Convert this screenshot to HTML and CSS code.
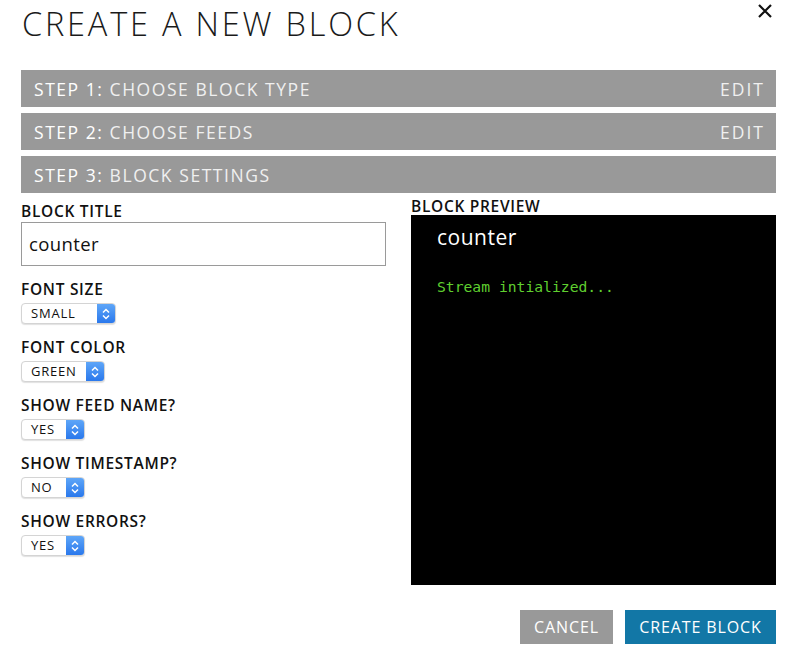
FILE: index.html
```html
<!DOCTYPE html>
<html>
<head>
<meta charset="utf-8">
<link rel="stylesheet" href="styles.css">
</head>
<body>
<div class="modal">
  <div class="header">
    <h1 class="title">CREATE A NEW BLOCK</h1>
    <span class="close">
      <svg width="16" height="16" viewBox="0 0 16 16"><path d="M2 2 L14 14 M14 2 L2 14" stroke="#111" stroke-width="2.2" fill="none"/></svg>
    </span>
  </div>
  <div class="steps">
    <div class="step"><span><b class="num">STEP 1:</b> CHOOSE BLOCK TYPE</span><span class="edit">EDIT</span></div>
    <div class="step"><span><b class="num">STEP 2:</b> CHOOSE FEEDS</span><span class="edit">EDIT</span></div>
    <div class="step"><span><b class="num">STEP 3:</b> BLOCK SETTINGS</span></div>
  </div>
  <div class="form">
    <div class="left">
      <div class="field">
        <label class="label first">BLOCK TITLE</label>
        <div class="input">counter</div>
      </div>
      <div class="field">
        <label class="label">FONT SIZE</label>
        <div class="select w-small"><span class="val">SMALL</span><span class="arrows"><svg width="10" height="14" viewBox="0 0 10 14"><path d="M2 5.5 L5 2.5 L8 5.5 M2 8.5 L5 11.5 L8 8.5" stroke="#fff" stroke-width="1.5" fill="none"/></svg></span></div>
      </div>
      <div class="field">
        <label class="label">FONT COLOR</label>
        <div class="select w-green"><span class="val">GREEN</span><span class="arrows"><svg width="10" height="14" viewBox="0 0 10 14"><path d="M2 5.5 L5 2.5 L8 5.5 M2 8.5 L5 11.5 L8 8.5" stroke="#fff" stroke-width="1.5" fill="none"/></svg></span></div>
      </div>
      <div class="field">
        <label class="label">SHOW FEED NAME?</label>
        <div class="select w-yes"><span class="val">YES</span><span class="arrows"><svg width="10" height="14" viewBox="0 0 10 14"><path d="M2 5.5 L5 2.5 L8 5.5 M2 8.5 L5 11.5 L8 8.5" stroke="#fff" stroke-width="1.5" fill="none"/></svg></span></div>
      </div>
      <div class="field">
        <label class="label">SHOW TIMESTAMP?</label>
        <div class="select w-yes"><span class="val">NO</span><span class="arrows"><svg width="10" height="14" viewBox="0 0 10 14"><path d="M2 5.5 L5 2.5 L8 5.5 M2 8.5 L5 11.5 L8 8.5" stroke="#fff" stroke-width="1.5" fill="none"/></svg></span></div>
      </div>
      <div class="field">
        <label class="label">SHOW ERRORS?</label>
        <div class="select w-yes"><span class="val">YES</span><span class="arrows"><svg width="10" height="14" viewBox="0 0 10 14"><path d="M2 5.5 L5 2.5 L8 5.5 M2 8.5 L5 11.5 L8 8.5" stroke="#fff" stroke-width="1.5" fill="none"/></svg></span></div>
      </div>
    </div>
    <div class="right">
      <label class="label plabel">BLOCK PREVIEW</label>
      <div class="preview">
        <div class="ptitle">counter</div>
        <div class="pstream">Stream intialized...</div>
      </div>
    </div>
  </div>
  <div class="actions">
    <button class="btn cancel">CANCEL</button>
    <button class="btn create">CREATE BLOCK</button>
  </div>
</div>
</body>
</html>
```
FILE: styles.css
```css
* { box-sizing: border-box; }
html, body { margin: 0; padding: 0; background: #fff; }
body { font-family: "Open Sans", "Liberation Sans", sans-serif; color: #111; }
.modal { width: 800px; height: 653px; padding: 0 24px 0 21px; }
.header { display: flex; justify-content: space-between; align-items: flex-start; height: 70px; }
.title { margin: 0; padding: 4px 0 0 1px; font-weight: 300; font-size: 32.5px; line-height: 40px; letter-spacing: 2.8px; color: #1a1a1a; }
.close { margin-top: 2px; margin-right: 3px; display: block; }
.steps { display: flex; flex-direction: column; gap: 6px; }
.step { height: 37px; background: #999; color: #f0f0f0; display: flex; justify-content: space-between; align-items: center; padding: 0 13px; font-size: 17.5px; letter-spacing: 1.55px; }
.step .num { font-weight: 400; color: #fff; }
.edit { color: #f0f0f0; letter-spacing: 2px; margin-right: -2px; }
.form { display: flex; gap: 25px; margin-top: 5px; }
.left { width: 365px; padding-top: 4px; }
.right { width: 365px; margin-top: -1px; }
.label { display: block; font-weight: 600; font-size: 15.5px; line-height: 18px; letter-spacing: 0.7px; color: #111; }
.field { margin-bottom: 13px; }
.field .label { padding-top: 1px; margin-bottom: 5px; }
.field .label.first { padding-top: 0; margin-bottom: 2px; }
.input { height: 44px; border: 1px solid #9a9a9a; padding: 0 7px; font-size: 18.5px; line-height: 41px; letter-spacing: 0.4px; color: #111; }
.select { height: 21px; display: flex; border: 1px solid #d4d4d4; border-radius: 4px; box-shadow: 0 1px 1px rgba(0,0,0,0.12); overflow: hidden; font-size: 13px; letter-spacing: 0.8px; background: #fff; }
.select .val { flex: 1; padding-left: 9px; line-height: 19px; color: #111; }
.select .arrows { width: 18px; background: linear-gradient(#5ea6f8, #2a78ec); display: flex; align-items: center; justify-content: center; }
.w-small { width: 95px; }
.w-green { width: 84px; }
.w-yes { width: 64px; }
.plabel { margin: 0; }
.preview { background: #000; height: 370px; padding: 8px 26px; }
.ptitle { color: #fff; font-size: 21px; line-height: 28px; letter-spacing: 0.5px; }
.pstream { color: #5fcf2f; font-family: "DejaVu Sans Mono", monospace; font-size: 14.7px; margin-top: 27px; }
.actions { display: flex; justify-content: flex-end; gap: 12px; margin-top: 25px; }
.btn { border: 0; height: 34px; color: #fff; font-family: "Open Sans", "Liberation Sans", sans-serif; font-size: 16px; letter-spacing: 0.9px; padding: 0; }
.cancel { background: #999; width: 93px; }
.create { background: #1277a6; width: 151px; }
```
